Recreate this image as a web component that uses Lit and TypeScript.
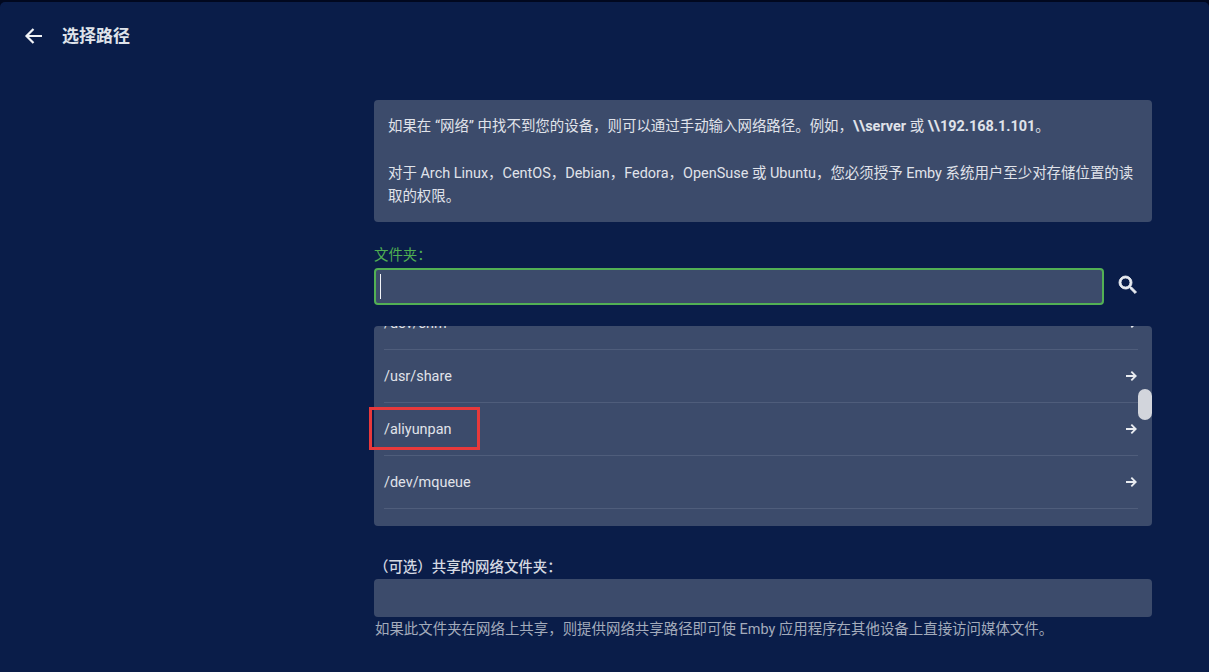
import { LitElement, html, css, svg } from "lit";
import { customElement } from "lit/decorators.js";

const arrow = svg`<path d="M4.5 12h14M12.5 5.5l6.5 6.5-6.5 6.5" fill="none" stroke="currentColor" stroke-width="2.8"/>`;

@customElement("app-root")
export class AppRoot extends LitElement {
  static styles = css`
    :host {
      display: block;
      height: 672px;
      overflow: hidden;
      background: #01081f;
      font-family: Roboto, "Noto Sans CJK SC", sans-serif;
      font-size: 14.45px;
      color: #dfe2e9;
    }
    .page {
      height: 670px;
      margin-top: 2px;
      border-radius: 5px 5px 0 0;
      background: #0a1d49;
      overflow: hidden;
    }
    .header {
      height: 68px;
      display: flex;
      align-items: center;
      padding-left: 22px;
      gap: 16px;
      box-sizing: border-box;
    }
    .back { width: 24px; height: 24px; color: #f0f2f6; display: block; }
    h1 {
      margin: 0;
      font-size: 17px;
      font-weight: 700;
      color: #dfe3ea;
      line-height: 24px;
    }
    .content {
      margin: 30px 0 0 374px;
      width: 778px;
    }
    .info {
      box-sizing: border-box;
      height: 122px;
      padding: 15px 14px;
      background: #3c4b6b;
      border-radius: 4px;
      line-height: 23px;
      color: #e0e3ea;
    }
    .info p { margin: 0; }
    .info p + p { margin-top: 24px; }
    .info b { font-weight: 700; }
    .folder-label {
      margin-top: 24px;
      height: 22px;
      line-height: 20px;
      color: #4fae52;
    }
    .folder-row { display: flex; align-items: center; }
    .input {
      box-sizing: border-box;
      width: 730px;
      height: 37px;
      background: #3c4b6b;
      border: 2px solid #52b054;
      border-radius: 4px;
      display: flex;
      align-items: center;
      padding-left: 4px;
    }
    .caret { width: 1px; height: 25px; background: #f2f4f8; }
    .search {
      width: 24px;
      height: 24px;
      margin: -4px 0 0 12px;
      color: #e8ebf0;
      display: block;
    }
    .list {
      position: relative;
      margin-top: 21px;
      height: 200px;
      background: #3c4b6b;
      border-radius: 4px;
      overflow: hidden;
    }
    .rows { margin-top: -29px; }
    .row {
      box-sizing: border-box;
      height: 53px;
      margin: 0 14px 0 10px;
      display: flex;
      align-items: center;
      justify-content: space-between;
      border-bottom: 1px solid #4f5d7b;
      color: #e0e3ea;
    }
    .row svg { width: 16px; height: 16px; color: #e8ebf0; margin-right: -1px; }
    .thumb {
      position: absolute;
      right: 0;
      top: 63px;
      width: 14px;
      height: 31px;
      border-radius: 7px;
      background: #d2d5dc;
    }
    .mark {
      position: absolute;
      left: 369px;
      top: 407px;
      width: 111px;
      height: 43px;
      box-sizing: border-box;
      border: 3px solid #e8393b;
    }
    .share-label {
      margin-top: 31px;
      height: 22px;
      line-height: 22px;
      font-weight: 500;
      color: #d5d9e2;
    }
    .share-input {
      height: 38px;
      background: #3c4b6b;
      border-radius: 4px;
    }
    .hint {
      margin-top: 3px;
      padding-left: 1px;
      line-height: 20px;
      color: #a3abbb;
    }
  `;

  render() {
    const rows = ["/dev/shm", "/usr/share", "/aliyunpan", "/dev/mqueue"];
    return html`
      <div class="page">
        <div class="header">
          <svg class="back" viewBox="0 0 24 24"><path d="M20 12H5M11.5 5l-7 7 7 7" fill="none" stroke="currentColor" stroke-width="2.2"/></svg>
          <h1>选择路径</h1>
        </div>
        <div class="content">
          <div class="info">
            <p>如果在 “网络” 中找不到您的设备，则可以通过手动输入网络路径。例如，<b>\\\\server</b> 或 <b>\\\\192.168.1.101</b>。</p>
            <p>对于 Arch Linux，CentOS，Debian，Fedora，OpenSuse 或 Ubuntu，您必须授予 Emby 系统用户至少对存储位置的读取的权限。</p>
          </div>
          <div class="folder-label">文件夹：</div>
          <div class="folder-row">
            <div class="input"><div class="caret"></div></div>
            <svg class="search" viewBox="0 0 24 24"><path fill="currentColor" stroke="currentColor" stroke-width="0.9" d="M15.5 14h-.79l-.28-.27A6.47 6.47 0 0 0 16 9.5 6.5 6.5 0 1 0 9.5 16c1.61 0 3.09-.59 4.23-1.57l.27.28v.79l5 4.99L20.49 19l-4.99-5zm-6 0C7.01 14 5 11.99 5 9.5S7.01 5 9.5 5 14 7.01 14 9.5 11.99 14 9.5 14z"/></svg>
          </div>
          <div class="list">
            <div class="rows">
              ${rows.map((r) => html`<div class="row"><span>${r}</span><svg viewBox="0 0 24 24">${arrow}</svg></div>`)}
            </div>
            <div class="thumb"></div>
          </div>
          <div class="share-label">（可选）共享的网络文件夹：</div>
          <div class="share-input"></div>
          <div class="hint">如果此文件夹在网络上共享，则提供网络共享路径即可使 Emby 应用程序在其他设备上直接访问媒体文件。</div>
        </div>
      </div>
      <div class="mark"></div>
    `;
  }
}
